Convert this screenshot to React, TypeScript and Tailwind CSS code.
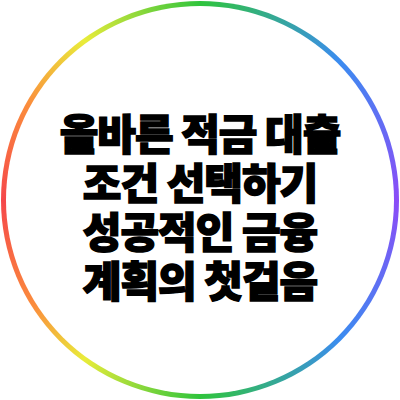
const lines = ['올바른 적금 대출', '조건 선택하기', '성공적인 금융', '계획의 첫걸음'];

export default function App() {
  return (
    <div className="flex h-[400px] w-[400px] items-center justify-center bg-white">
      <div className="flex h-[398px] w-[398px] items-center justify-center rounded-full bg-[conic-gradient(#2fc43c_0%,#3b8cf0_12.5%,#8b4cf7_25%,#3b8cf0_37.5%,#2fc43c_50%,#e9ec3a_60%,#fb8c3c_66%,#f5474a_75%,#fb8c3c_83%,#e9ec3a_90%,#2fc43c_100%)] p-[5px]">
        <div className="flex h-full w-full items-center justify-center rounded-full bg-white">
          <div className="mt-[10px] flex flex-col items-center gap-[7px] font-['Noto_Sans_CJK_KR',sans-serif] text-[42px] leading-[42px] font-black tracking-[-1px] text-black [-webkit-text-stroke:1.5px_black]">
            {lines.map((line) => (
              <p key={line} className="whitespace-nowrap">
                {line}
              </p>
            ))}
          </div>
        </div>
      </div>
    </div>
  );
}
